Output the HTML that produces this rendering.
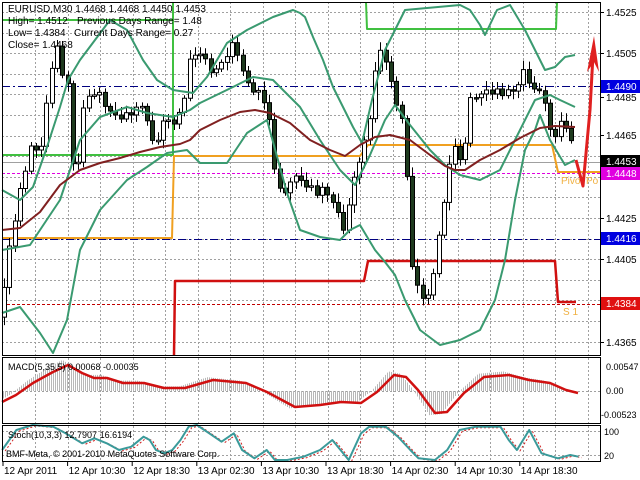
<!DOCTYPE html>
<html><head><meta charset="utf-8"><style>
html,body{margin:0;padding:0;background:#fff;width:640px;height:480px;overflow:hidden}
svg{display:block;font-family:"Liberation Sans",sans-serif}
</style></head><body>
<svg id="s" width="640" height="480" xmlns="http://www.w3.org/2000/svg"></svg>
<script>
var S=document.getElementById('s'),h='';
function L(x1,y1,x2,y2,c,w,d){h+='<line x1="'+x1+'" y1="'+y1+'" x2="'+x2+'" y2="'+y2+'" stroke="'+c+'" stroke-width="'+(w||1)+'"'+(d?' stroke-dasharray="'+d+'"':'')+'/>';}
function P(pts,c,w,d){h+='<polyline fill="none" stroke="'+c+'" stroke-width="'+w+'" stroke-linejoin="round"'+(d?' stroke-dasharray="'+d+'"':'')+' points="'+pts.map(function(p){return p[0]+','+p[1]}).join(' ')+'"/>';}
function T(x,y,t,c,fs,a){h+='<text x="'+x+'" y="'+y+'" fill="'+(c||'#000')+'" font-size="'+(fs||10)+'"'+(a?' text-anchor="'+a+'"':'')+'>'+t+'</text>';}
function R(x,y,w,hh,f,s){h+='<rect x="'+x+'" y="'+y+'" width="'+w+'" height="'+hh+'" fill="'+f+'"'+(s?' stroke="'+s+'"':'')+'/>';}
function interp(pts,x){for(var i=1;i<pts.length;i++){if(x<=pts[i][0]){var a=pts[i-1],b=pts[i];return a[1]+(b[1]-a[1])*(x-a[0])/(b[0]-a[0]);}}return pts[pts.length-1][1];}
// grid
var gx=[];for(var x=35;x<600;x+=32.5)gx.push(Math.round(x)+.5);
function vgrid(y1,y2){gx.forEach(function(x){L(x,y1,x,y2,'#a0a0a0',1,'2,2')});}
vgrid(2,355);vgrid(358,423);vgrid(426,461);
for(var y=12;y<350;y+=20.6)L(2,Math.round(y)+.5,600,Math.round(y)+.5,'#a0a0a0',1,'2,2');
L(2,391.5,600,391.5,'#a0a0a0',1,'2,2');L(2,431.5,600,431.5,'#a0a0a0',1,'2,2');L(2,455.5,600,455.5,'#a0a0a0',1,'2,2');
// horizontal level lines
L(2,86.5,600,86.5,'#000080',1,'8,3,2,3');L(2,239.5,600,239.5,'#000080',1,'8,3,2,3');
L(2,304.5,600,304.5,'#c00000',1,'3,2');L(2,173.5,600,173.5,'#e000e0',1,'3,2');L(2,162.5,600,162.5,'#a0a0a0',1);
// green range box
P([[2,20],[173,20],[173,2]],'#40c040',2);P([[2,155],[173,155],[173,2]],'#40c040',2);
P([[366,2],[367,29],[556,29],[557,2]],'#40c040',2);
// orange pivot
P([[2,238],[172,238],[174,156],[360,156],[368,145],[552,145],[558,172],[600,172]],'#f0a020',2);
T(561,184,'Pivot Po','#f0b040',10);T(563,315,'S 1','#f0b040',10);
// red S1
P([[174,355],[175,281],[364,281],[368,261],[555,261],[558,302],[576,302]],'#d01010',2.5);
// price candles
var cp=[[3,300],[10,240],[20,190],[30,150],[40,150],[50,80],[55,40],[62,75],[68,80],[72,160],[76,185],[80,140],[85,100],[95,90],[100,95],[110,115],[125,115],[140,110],[145,100],[150,140],[155,145],[165,120],[175,120],[182,110],[190,60],[200,50],[210,70],[215,75],[225,55],[235,40],[240,70],[245,80],[255,90],[262,95],[268,115],[275,175],[285,195],[290,180],[300,180],[310,185],[315,195],[320,190],[335,200],[340,225],[345,230],[350,200],[355,170],[362,150],[368,130],[375,75],[380,50],[385,55],[390,80],[398,110],[405,135],[410,250],[415,280],[420,295],[430,300],[435,260],[440,220],[445,200],[450,155],[455,150],[460,160],[465,140],[470,100],[475,95],[480,100],[485,90],[495,90],[505,95],[515,90],[520,75],[525,70],[530,85],[535,95],[540,90],[545,100],[548,130],[555,135],[560,125],[565,128],[570,130],[575,160]];
var prev=interp(cp,1),k=0;
for(var x=4;x<=576;x+=5.3){var c=interp(cp,x)+((k*7)%5-2)*2;k++;var o=prev;var t=Math.min(o,c),b=Math.max(o,c);if(b-t<1.5)b=t+1.5;
 var wt=t-3-(k*13%7),wb=b+3+(k*11%6);var xx=Math.round(x)+.5;L(xx,wt,xx,wb,'#000',1);
 if(c<o)R(xx-2,t,4,b-t,'#fff','#000');else R(xx-2,t,4,b-t,'#1e3a1e','#000');prev=c;}
// bands
P([[2,190],[20,200],[33,187],[47,147],[60,107],[68,80],[80,60],[95,40],[110,20],[127,30],[143,60],[157,80],[173,90],[193,93],[207,77],[227,43],[247,30],[273,17],[293,10],[300,13],[305,17],[313,37],[323,60],[333,87],[343,107],[353,127],[362,143],[372,100],[385,50],[395,30],[405,10],[460,5],[470,10],[480,25],[485,35],[497,10],[510,5],[525,30],[535,50],[545,70],[555,67],[565,57],[575,55]],'#3a9a70',2);
P([[2,250],[30,245],[60,200],[80,140],[100,117],[127,107],[147,113],[173,117],[190,110],[200,103],[233,87],[253,77],[273,80],[293,100],[300,107],[320,140],[340,170],[355,185],[370,155],[385,120],[395,105],[410,125],[430,150],[445,165],[460,175],[480,180],[500,170],[520,130],[535,100],[550,95],[560,100],[575,107]],'#3a9a70',2);
P([[2,313],[20,307],[40,333],[53,353],[67,320],[80,250],[100,210],[127,180],[147,167],[167,153],[187,150],[200,163],[227,163],[247,133],[267,120],[287,193],[300,230],[320,237],[340,240],[350,230],[360,225],[375,250],[385,262],[395,275],[405,300],[420,330],[440,345],[460,340],[480,330],[495,300],[505,260],[515,200],[525,150],[535,130],[540,115],[550,140],[565,165],[575,160]],'#3a9a70',2);
// MA
P([[2,230],[20,228],[40,212],[60,185],[80,170],[100,163],[120,158],[140,152],[160,147],[180,144],[190,140],[200,130],[220,120],[240,112],[255,110],[270,113],[290,123],[310,140],[330,150],[345,156],[360,145],[375,137],[390,135],[410,140],[430,155],[445,166],[455,170],[465,170],[480,160],[500,150],[520,138],[540,128],[555,126],[575,127]],'#802020',2);
// arrow
P([[576,160],[583,186],[590,110],[593,55]],'#e02020',3);
h+='<polygon points="594,36 587,72 594,62 599,72" fill="#e02020"/>';
// MACD
var mr=[[2,402],[16,395],[33,383],[53,372],[68,365],[82,373],[94,378],[107,378],[123,383],[144,383],[164,388],[185,388],[213,380],[246,383],[267,392],[295,407],[320,405],[341,402],[361,403],[377,392],[394,375],[406,377],[418,390],[435,413],[447,412],[464,393],[484,377],[509,375],[529,380],[550,383],[566,390],[578,393]];
for(var x=3;x<577;x+=2){var v=interp(mr,x+6);v=391+(v-392)*1.15;L(x+.5,391,x+.5,v,'#b8b8b8',1);}
P(mr,'#d01010',2.5);
// Stoch
var st=[[5,300],[40,240],[80,225],[130,230],[160,250],[200,280],[230,265],[260,280],[290,300],[320,290],[350,260],[365,270],[380,300],[400,310],[420,300],[440,270],[460,230],[480,225],[510,250],[540,275],[570,250],[590,300],[620,325],[650,300],[670,330],[700,330],[740,320],[780,300],[810,270],[830,300],[850,330],[880,250],[900,230],[940,230],[970,260],[1000,300],[1020,325],[1060,330],[1090,300],[1120,240],[1160,230],[1220,230],[1240,270],[1260,300],[1290,240],[1320,310],[1360,325],[1390,315],[1410,320]].map(function(p){return [+(p[0]/2.4375).toFixed(1),+(p[1]/3+350).toFixed(1)]});
P(st.map(function(p){return [p[0]+3,p[1]+1]}),'#d02020',1,'2,2');
P(st,'#3a9a9a',2);
// frames
R(2.5,2.5,598,353,'none','#000');R(2.5,357.5,598,66,'none','#000');R(2.5,425.5,598,36,'none','#000');
// right scale
var pl=[[12,'1.4525'],[53,'1.4505'],[97,'1.4485'],[135,'1.4465'],[218,'1.4425'],[259,'1.4405'],[342,'1.4365']];
pl.forEach(function(p){L(600,p[0]+.5,604,p[0]+.5,'#000',1);T(606,p[0]+4,p[1],'#000',10);});
[[80,'#0000e0','1.4490'],[155,'#000','1.4453'],[167,'#e000e0','1.4448'],[232,'#0000e0','1.4416'],[297,'#e01010','1.4384']].forEach(function(b){R(601,b[0],39,13,b[1]);T(606,b[0]+10,b[2],'#fff',10);});
T(606,370,'0.00547','#000',9);T(606,394,'0.00','#000',9);T(601,418,'-0.00523','#000',9);
T(604,435,'100','#000',9);T(604,459,'20','#000',9);
// texts
T(8,12,'EURUSD,M30  1.4468 1.4468 1.4450 1.4453','#000',10);
T(8,24,'High= 1.4512','#000',10);T(77,24,'Previous Days Range= 1.48','#000',10);
T(8,36,'Low= 1.4384','#000',10);T(74,36,'Current Days Range= 0.27','#000',10);
T(8,48,'Close= 1.4468','#000',10);
T(8,370,'MACD(5,35,5) 0.00068 -0.00035','#000',9);
T(8,438,'Stoch(10,3,3) 12.7907 16.6194','#000',9);
T(6,457,'BMF-Meta, © 2001-2010 MetaQuotes Software Corp.','#000',9);
var dl=['12 Apr 2011','12 Apr 10:30','12 Apr 18:30','13 Apr 02:30','13 Apr 10:30','13 Apr 18:30','14 Apr 02:30','14 Apr 10:30','14 Apr 18:30'];
dl.forEach(function(d,i){var x=3+i*64.6;L(x,462,x,466,'#000',1);T(x+1,474,d,'#000',10);});
S.innerHTML=h;
</script>
</body></html>
